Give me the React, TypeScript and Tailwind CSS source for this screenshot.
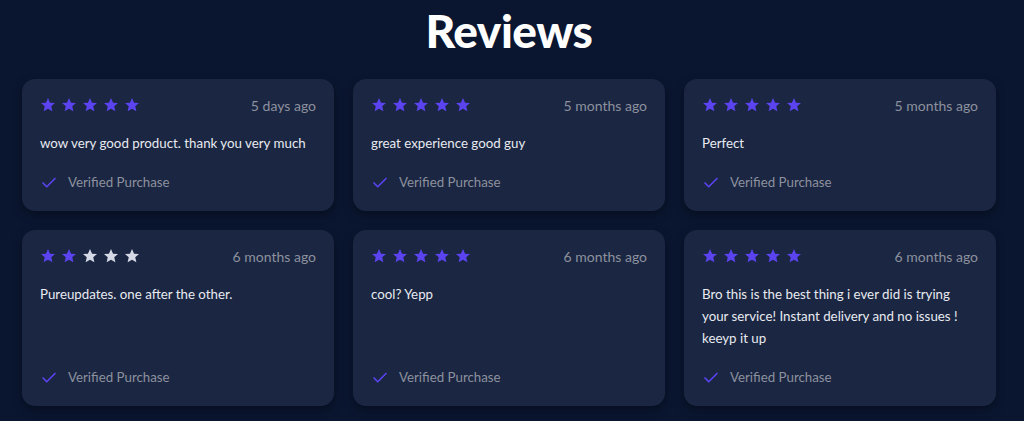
import React from "react"
import { Check } from "lucide-react"

interface Review {
  rating: number
  date: string
  text: string
}

const reviews: Review[] = [
  { rating: 5, date: "5 days ago", text: "wow very good product. thank you very much" },
  { rating: 5, date: "5 months ago", text: "great experience good guy" },
  { rating: 5, date: "5 months ago", text: "Perfect" },
  { rating: 2, date: "6 months ago", text: "Pureupdates. one after the other." },
  { rating: 5, date: "6 months ago", text: "cool? Yepp" },
  {
    rating: 5,
    date: "6 months ago",
    // line breaks kept as in the original layout
    text: "Bro this is the best thing i ever did is trying\nyour service! Instant delivery and no issues !\nkeeyp it up",
  },
]

const Star = ({ filled }: { filled: boolean }) => (
  <svg width="16" height="16" viewBox="0 0 24 24" className={filled ? "text-[#5b44f0]" : "text-[#d5d9e6]"}>
    <path
      fill="currentColor"
      d="M12 1.5l3.09 7.02 7.41.6-5.64 4.94 1.72 7.44L12 17.6l-6.58 3.9 1.72-7.44L1.5 9.12l7.41-.6z"
    />
  </svg>
)

const ReviewCard = ({ review }: { review: Review }) => (
  <div className="flex h-full flex-col rounded-[13px] bg-[#1a2642] px-[18px] pt-[18px] pb-[18px] shadow-[0_4px_10px_rgba(0,0,0,0.35)]">
    <div className="flex h-4 items-center justify-between">
      <div className="flex gap-[5px]">
        {[0, 1, 2, 3, 4].map((i) => (
          <Star key={i} filled={i < review.rating} />
        ))}
      </div>
      <span className="text-[14px] text-[#8d919e]">{review.date}</span>
    </div>
    <p className="mt-[19px] whitespace-pre-line text-[13.3px] leading-[22px] text-[#e8eaf0]">{review.text}</p>
    <div className="mt-auto pt-[19px]">
      <div className="flex h-5 items-center gap-[10px]">
        <Check size={18} strokeWidth={2.2} className="text-[#5b44f0]" />
        <span className="text-[13.3px] text-[#8d919e]">Verified Purchase</span>
      </div>
    </div>
  </div>
)

export default function App() {
  return (
    <div className="min-h-screen bg-[#0a1630] pb-4" style={{ fontFamily: "Lato, 'Noto Sans', sans-serif" }}>
      <div className="ml-[22px] w-[974px]">
        <h1 className="pt-[3px] text-center text-[46px] font-black leading-[55px] tracking-[-0.5px] text-white">
          Reviews
        </h1>
        <div className="mt-[21px] grid grid-cols-3 gap-[19px]">
          {reviews.map((r, i) => (
            <ReviewCard key={i} review={r} />
          ))}
        </div>
      </div>
    </div>
  )
}
